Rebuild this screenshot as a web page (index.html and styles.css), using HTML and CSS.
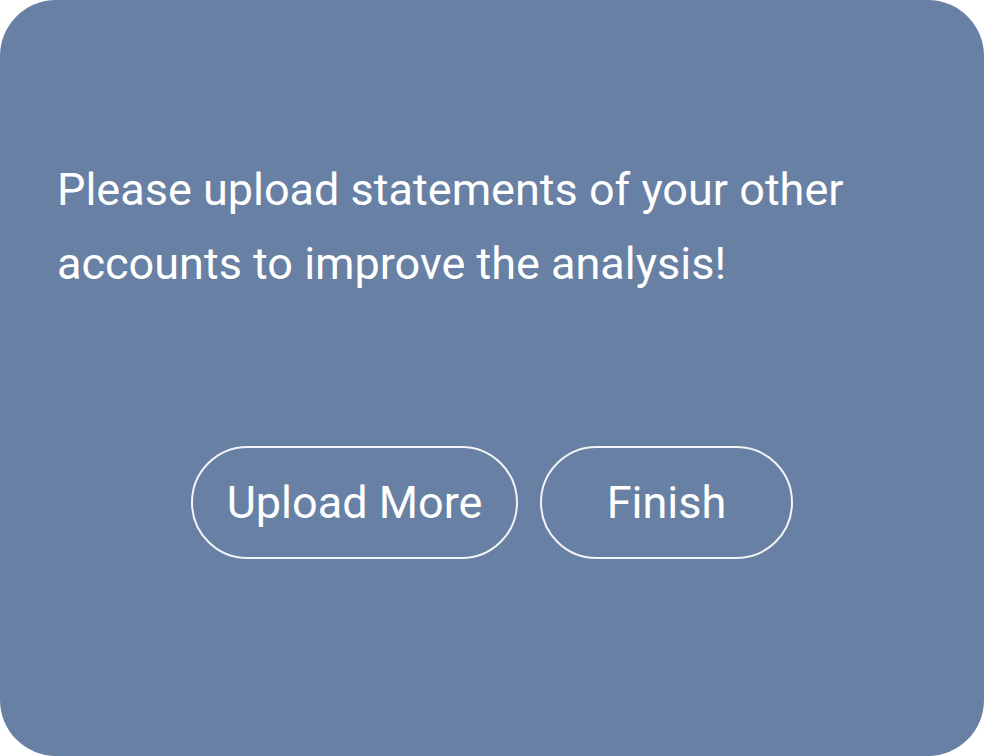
FILE: index.html
```html
<!DOCTYPE html>
<html>
<head>
<meta charset="utf-8">
<link rel="stylesheet" href="styles.css">
</head>
<body>
<div class="card">
  <p class="message">Please upload statements of your other accounts to improve the analysis!</p>
  <div class="actions">
    <button class="btn btn-upload">Upload More</button>
    <button class="btn btn-finish">Finish</button>
  </div>
</div>
</body>
</html>
```

FILE: styles.css
```css
html, body {
  margin: 0;
  padding: 0;
  background: #ffffff;
}
.card {
  width: 984px;
  height: 756px;
  box-sizing: border-box;
  background: #6780a3;
  border-radius: 56px;
  padding: 153px 57px 0 57px;
  font-family: Roboto, "Noto Sans", sans-serif;
  color: #ffffff;
}
.message {
  margin: 0;
  font-size: 45px;
  line-height: 74px;
  max-width: 860px;
}
.actions {
  display: flex;
  justify-content: center;
  gap: 22px;
  margin-top: 145px;
}
.btn {
  height: 113px;
  box-sizing: border-box;
  border: 2px solid #f2f4f8;
  border-radius: 57px;
  background: transparent;
  color: #ffffff;
  font-family: Roboto, "Noto Sans", sans-serif;
  font-size: 45px;
  padding: 0;
}
.btn-upload { width: 327px; }
.btn-finish { width: 253px; }
```
